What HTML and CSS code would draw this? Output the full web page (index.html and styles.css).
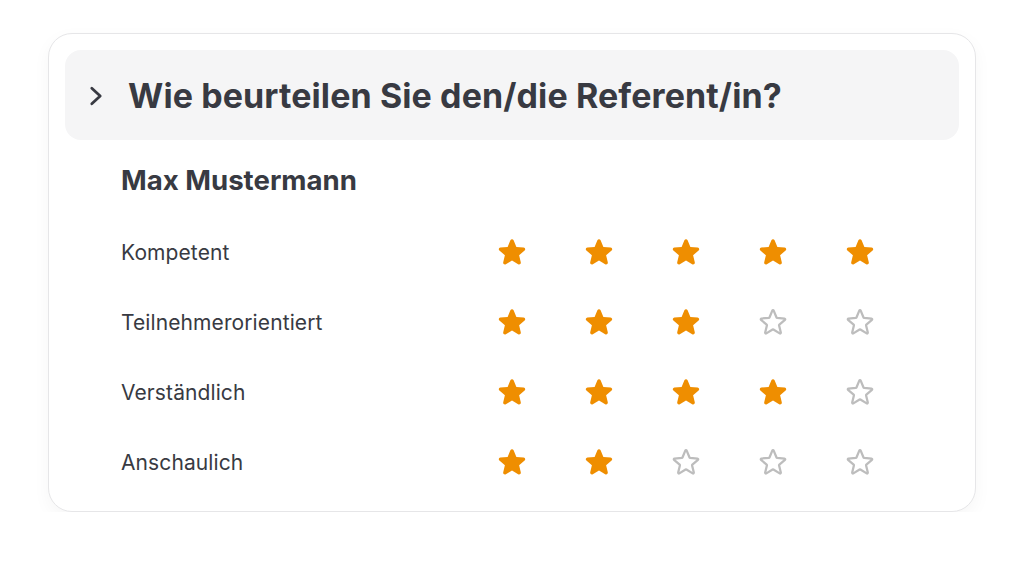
FILE: index.html
```html
<!DOCTYPE html>
<html lang="de">
<head>
<meta charset="utf-8">
<title>Bewertung</title>
<link rel="stylesheet" href="styles.css">
</head>
<body>
<svg width="0" height="0" class="defs" aria-hidden="true">
  <defs>
    <symbol id="star-full" viewBox="0 0 24 24">
      <path d="M10.788 3.21c.448-1.077 1.976-1.077 2.424 0l2.082 5.006 5.404.434c1.164.093 1.636 1.545.749 2.305l-4.117 3.527 1.257 5.273c.271 1.136-.964 2.033-1.96 1.425L12 18.354 7.373 21.18c-.996.608-2.231-.29-1.960-1.425l1.257-5.273-4.117-3.527c-.887-.76-.415-2.212.749-2.305l5.404-.434 2.082-5.005Z" fill="currentColor"/>
    </symbol>
    <symbol id="star-empty" viewBox="0 0 24 24">
      <path d="M11.48 3.499a.562.562 0 0 1 1.04 0l2.125 5.111a.563.563 0 0 0 .475.345l5.518.442c.499.04.701.663.321.988l-4.204 3.602a.563.563 0 0 0-.182.557l1.285 5.385a.562.562 0 0 1-.84.61l-4.725-2.885a.563.563 0 0 0-.586 0L6.982 20.540a.562.562 0 0 1-.84-.61l1.285-5.386a.562.562 0 0 0-.182-.557l-4.204-3.602a.562.562 0 0 1 .321-.988l5.518-.442a.563.563 0 0 0 .475-.345L11.48 3.5Z" fill="none" stroke="currentColor" stroke-width="1.7" stroke-linejoin="round"/>
    </symbol>
  </defs>
</svg>
<div class="card">
  <div class="header">
    <svg class="chevron" viewBox="0 0 14 22" width="14" height="22"><path d="M2.8 3.2l8.4 7.8-8.4 7.8" fill="none" stroke="currentColor" stroke-width="2.8" stroke-linecap="round" stroke-linejoin="round"/></svg>
    <h2 class="title">Wie beurteilen Sie den/die Referent/in?</h2>
  </div>
  <div class="content">
    <h3 class="name">Max Mustermann</h3>
    <div class="row">
      <span class="label">Kompetent</span>
      <span class="cell"><svg class="star full"><use href="#star-full"/></svg></span>
      <span class="cell"><svg class="star full"><use href="#star-full"/></svg></span>
      <span class="cell"><svg class="star full"><use href="#star-full"/></svg></span>
      <span class="cell"><svg class="star full"><use href="#star-full"/></svg></span>
      <span class="cell"><svg class="star full"><use href="#star-full"/></svg></span>
    </div>
    <div class="row">
      <span class="label">Teilnehmerorientiert</span>
      <span class="cell"><svg class="star full"><use href="#star-full"/></svg></span>
      <span class="cell"><svg class="star full"><use href="#star-full"/></svg></span>
      <span class="cell"><svg class="star full"><use href="#star-full"/></svg></span>
      <span class="cell"><svg class="star empty"><use href="#star-empty"/></svg></span>
      <span class="cell"><svg class="star empty"><use href="#star-empty"/></svg></span>
    </div>
    <div class="row">
      <span class="label">Verständlich</span>
      <span class="cell"><svg class="star full"><use href="#star-full"/></svg></span>
      <span class="cell"><svg class="star full"><use href="#star-full"/></svg></span>
      <span class="cell"><svg class="star full"><use href="#star-full"/></svg></span>
      <span class="cell"><svg class="star full"><use href="#star-full"/></svg></span>
      <span class="cell"><svg class="star empty"><use href="#star-empty"/></svg></span>
    </div>
    <div class="row">
      <span class="label">Anschaulich</span>
      <span class="cell"><svg class="star full"><use href="#star-full"/></svg></span>
      <span class="cell"><svg class="star full"><use href="#star-full"/></svg></span>
      <span class="cell"><svg class="star empty"><use href="#star-empty"/></svg></span>
      <span class="cell"><svg class="star empty"><use href="#star-empty"/></svg></span>
      <span class="cell"><svg class="star empty"><use href="#star-empty"/></svg></span>
    </div>
  </div>
</div>
</body>
</html>
```
FILE: styles.css
```css
* { box-sizing: border-box; }
html, body { margin: 0; padding: 0; background: #ffffff; }
body {
  font-family: Inter, "Noto Sans", "Liberation Sans", sans-serif;
  color: #383a42;
  padding: 33px 48px 0 48px;
}
.defs { position: absolute; width: 0; height: 0; overflow: hidden; }
.card {
  width: 928px;
  border: 1px solid #e6e6e8;
  border-radius: 24px;
  padding: 16px 16px 14px 16px;
  background: #fff;
  box-shadow: 0 6px 18px rgba(0,0,0,0.04);
}
.header {
  height: 90px;
  background: #f5f5f6;
  border-radius: 16px;
  display: flex;
  align-items: center;
  padding-left: 24px;
  gap: 25px;
}
.chevron { color: #383a42; flex: none; margin-top: 1px; }
.title {
  margin: 0;
  font-size: 34px;
  font-weight: 700;
  letter-spacing: 0.1px;
  color: #383a42;
}
.content { padding: 24px 56px 0 56px; }
.name {
  margin: 0 0 21px 0;
  font-size: 27.6px;
  line-height: 32px;
  font-weight: 700;
  color: #383a42;
}
.row {
  display: grid;
  grid-template-columns: 1fr repeat(5, 87px);
  align-items: center;
  height: 70px;
}
.label { font-size: 21px; letter-spacing: 0.1px; color: #383a42; }
.cell { display: flex; justify-content: center; align-items: center; }
.star { width: 32px; height: 32px; }
.star.full { color: #ef8e00; }
.star.empty { color: #bdbdbd; }
```
